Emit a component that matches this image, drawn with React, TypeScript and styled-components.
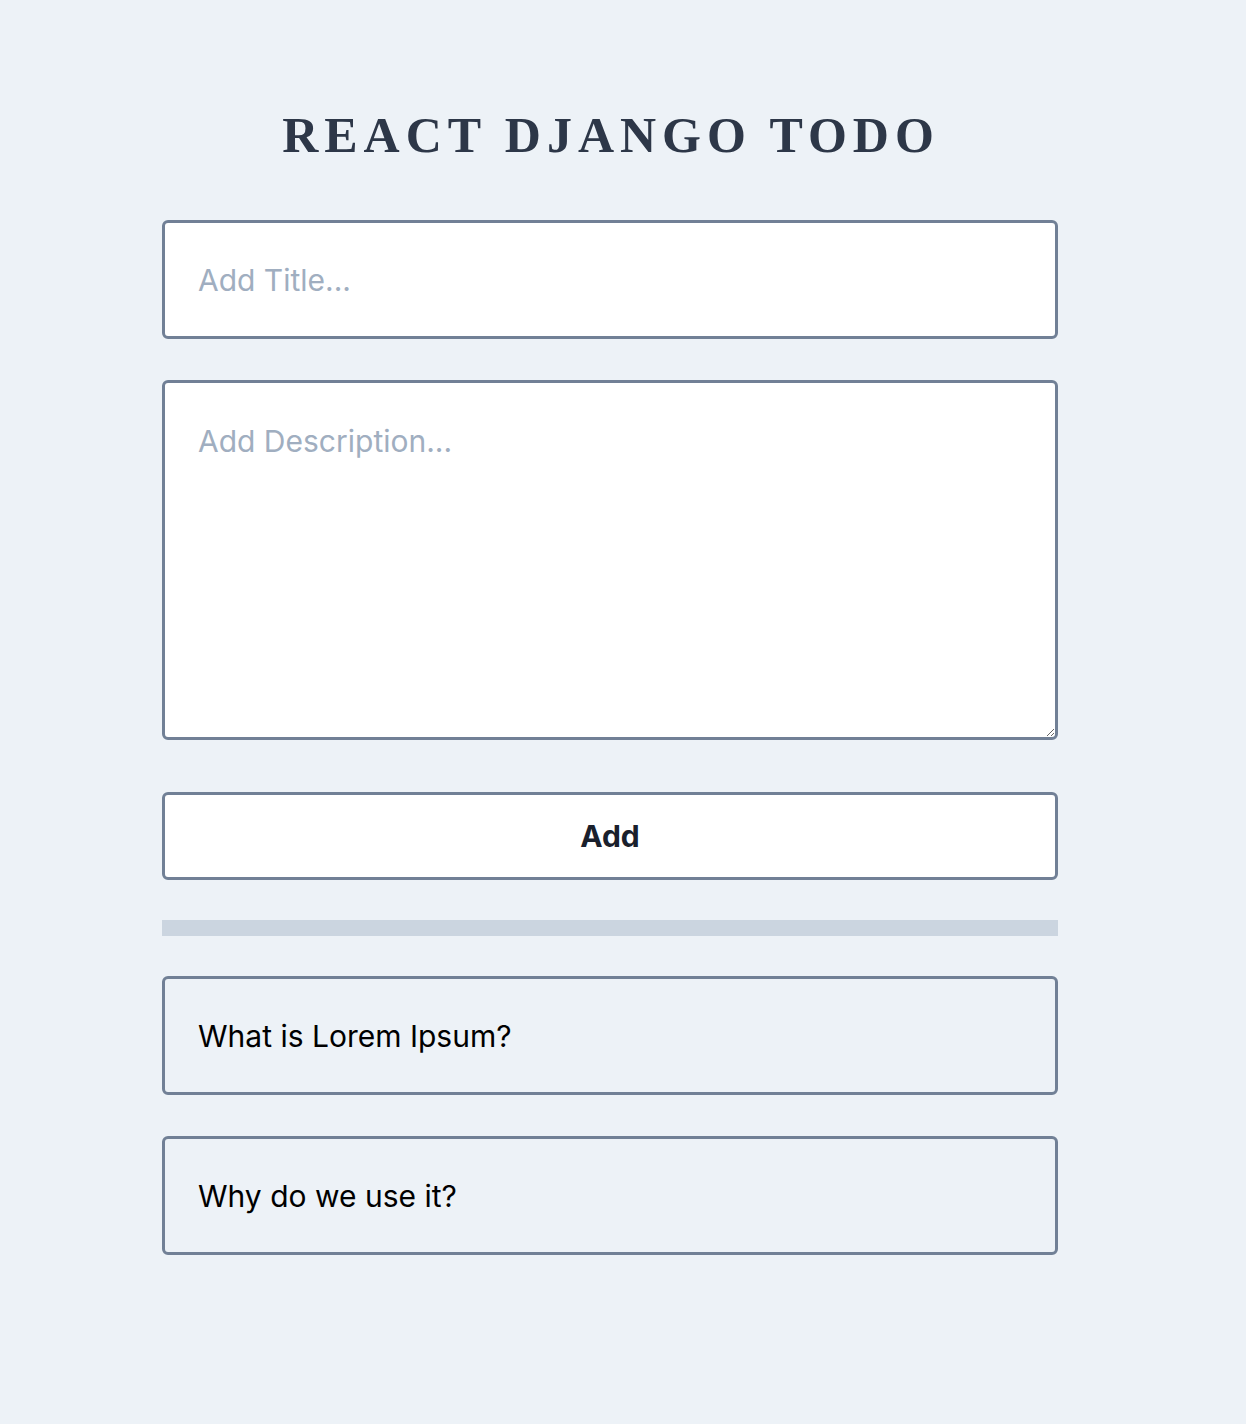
import styled, { createGlobalStyle } from "styled-components"

const GlobalStyle = createGlobalStyle`
    html, body {
        margin: 0;
        padding: 0;
        background-color: #edf2f7;
    }

    body {
        font-family: Inter, "Noto Sans", "Liberation Sans", sans-serif;
        min-height: 1424px;
    }

    * {
        box-sizing: border-box;
    }
`

const Page = styled.div`
    padding: 110px 188px 120px 162px;
`

const Heading = styled.h1`
    margin: 0 0 60px;
    font-family: "Liberation Serif", "Times New Roman", serif;
    font-size: 50px;
    line-height: 50px;
    font-weight: 700;
    letter-spacing: 6px;
    text-align: center;
    color: #2d3748;
    padding-left: 2px;
`

const Form = styled.form`
    display: flex;
    flex-direction: column;
`

const field = `
    display: block;
    width: 100%;
    background-color: #fff;
    border: 3px solid #718096;
    border-radius: 6px;
    font-family: Inter, "Noto Sans", sans-serif;
    font-size: 30px;
    color: #1a202c;
    outline: none;

    &::placeholder {
        color: #a0aec0;
    }
`

const TitleInput = styled.input`
    ${field}
    height: 119px;
    padding: 0 33px;
    margin-bottom: 41px;
`

const DescriptionInput = styled.textarea`
    ${field}
    height: 360px;
    padding: 40px 33px 20px;
    line-height: 1.2;
    resize: vertical;
    margin-bottom: 52px;
`

const AddButton = styled.button`
    ${field}
    height: 88px;
    font-weight: 700;
    cursor: pointer;
    text-align: center;
`

const Divider = styled.hr`
    margin: 40px 0;
    height: 16px;
    border: none;
    background-color: #cbd5e0;
`

const TodoList = styled.ul`
    list-style: none;
    margin: 0;
    padding: 0;
    display: flex;
    flex-direction: column;
    gap: 41px;
`

const TodoItem = styled.li`
    display: flex;
    align-items: center;
    height: 119px;
    padding: 0 33px;
    border: 3px solid #718096;
    border-radius: 6px;
    font-size: 30px;
    color: #000;
`

const todos = [
    { id: 1, title: "What is Lorem Ipsum?" },
    { id: 2, title: "Why do we use it?" },
]

export default function App() {
    return (
        <>
            <GlobalStyle />
            <Page>
                <Heading>REACT DJANGO TODO</Heading>
                <Form onSubmit={(e) => e.preventDefault()}>
                    <TitleInput type="text" placeholder="Add Title..." />
                    <DescriptionInput placeholder="Add Description..." />
                    <AddButton type="submit">Add</AddButton>
                </Form>
                <Divider />
                <TodoList>
                    {todos.map((todo) => (
                        <TodoItem key={todo.id}>{todo.title}</TodoItem>
                    ))}
                </TodoList>
            </Page>
        </>
    )
}
